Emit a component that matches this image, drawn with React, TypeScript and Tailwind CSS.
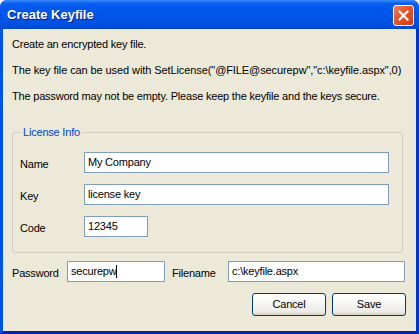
import React from "react";

function XPInput({ value, className, caret }: { value: string; className: string; caret?: boolean }) {
  return (
    <div className={`h-[21px] border border-[#7f9db9] bg-white flex items-center pl-[3px] text-[11px] text-black ${className}`}>
      <span>{value}</span>
      {caret && <span className="inline-block w-px h-[13px] bg-black" />}
    </div>
  );
}

function XPButton({ label }: { label: string }) {
  return (
    <button className="w-[74px] h-[23px] rounded-[3px] border border-[#003c74] bg-[linear-gradient(to_bottom,#ffffff_0%,#f7f7f4_40%,#ecebe6_85%,#d6d0c5_100%)] text-[11px] text-black flex items-center justify-center">
      {label}
    </button>
  );
}

export default function App() {
  return (
    <div className="w-[419px] h-[334px] bg-white tracking-[-0.2px] whitespace-nowrap" style={{ fontFamily: '"Liberation Sans", Arial, sans-serif' }}>
      <div className="w-full h-full flex flex-col rounded-t-[7px] overflow-hidden bg-[#0054e3]">
        <div className="h-[29px] shrink-0 flex items-center justify-between pl-[7px] pr-[5px] bg-[linear-gradient(to_bottom,#3b8cff_0%,#0a5ff0_12%,#0058ee_30%,#0055e8_60%,#0050de_85%,#0046cf_100%)]">
          <span className="text-white font-bold text-[13px] tracking-[0px] [text-shadow:1px_1px_#0a1e8a] mt-[1px]">Create Keyfile</span>
          <div className="w-[21px] h-[21px] rounded-[3px] border border-white bg-[linear-gradient(135deg,#ef7c57_0%,#e2552c_45%,#c9401a_100%)] flex items-center justify-center mt-[1px]">
            <svg width="11" height="11" viewBox="0 0 11 11">
              <path d="M1.5 1.5 L9.5 9.5 M9.5 1.5 L1.5 9.5" stroke="white" strokeWidth="2.2" strokeLinecap="square" />
            </svg>
          </div>
        </div>
        <div className="flex-1 flex flex-col bg-[#ece9d8] border-l-[3px] border-l-[#0055e5] border-r-[3px] border-r-[#0033cc] border-b-[3px] border-b-[#0022b0] text-[11px] text-black pt-[2px]">
          <p className="leading-[26px] pl-[9px]">Create an encrypted key file.</p>
          <p className="leading-[26px] pl-[9px] tracking-[-0.09px]">The key file can be used with SetLicense("@FILE@securepw","c:\keyfile.aspx",0)</p>
          <p className="leading-[26px] pl-[9px]">The password may not be empty. Please keep the keyfile and the keys secure.</p>
          <div className="relative ml-[9px] mt-[23px] w-[391px] h-[121px] border border-[#d0d0bf] rounded-[3px] pt-[19px] pl-[7px] flex flex-col gap-[11px]">
            <span className="absolute left-[8px] top-[-8px] px-[2px] bg-[#ece9d8] text-[#0046d5] leading-[14px]">License Info</span>
            <div className="flex items-center">
              <span className="w-[64px] pt-[3px]">Name</span>
              <XPInput value="My Company" className="w-[305px]" />
            </div>
            <div className="flex items-center">
              <span className="w-[64px] pt-[3px]">Key</span>
              <XPInput value="license key" className="w-[305px]" />
            </div>
            <div className="flex items-center">
              <span className="w-[64px] pt-[3px]">Code</span>
              <XPInput value="12345" className="w-[64px]" />
            </div>
          </div>
          <div className="flex items-center mt-[8px] pl-[9px]">
            <span className="w-[55px] pt-[3px]">Password</span>
            <XPInput value="securepw" className="w-[98px]" caret />
            <span className="ml-[7px] w-[56px] pt-[3px]">Filename</span>
            <XPInput value="c:\keyfile.aspx" className="w-[177px]" />
          </div>
          <div className="flex justify-end gap-[6px] mt-[11px] pr-[10px]">
            <XPButton label="Cancel" />
            <XPButton label="Save" />
          </div>
        </div>
      </div>
    </div>
  );
}
